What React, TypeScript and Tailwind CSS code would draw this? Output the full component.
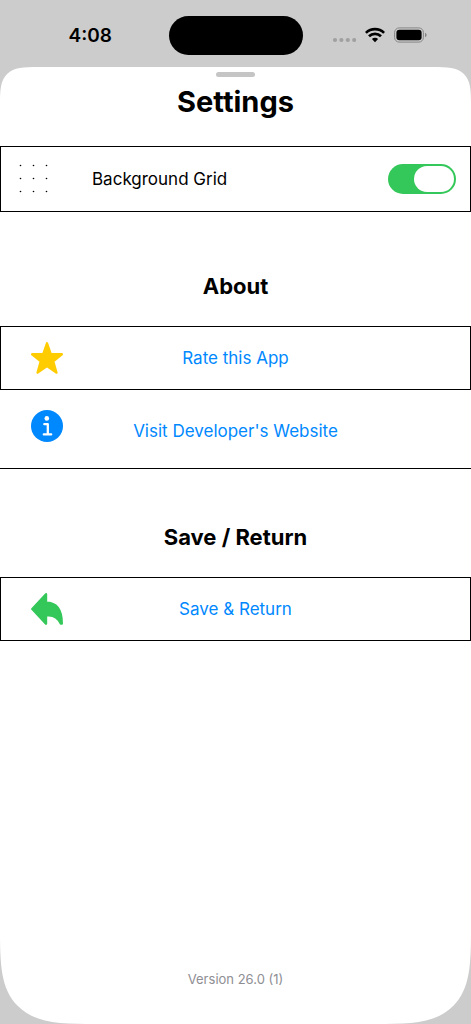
import { useState } from "react";
import type { FC, ReactNode } from "react";

const StatusBar: FC = () => (
  <header className="grid h-[67px] shrink-0 grid-cols-[1fr_134px_1fr] items-center">
    <time className="pt-1 pl-3 text-center text-[19px] leading-6 font-semibold">
      4:08
    </time>
    <div className="mt-[3px] h-[39px] rounded-full bg-black" />
    <div className="flex items-center justify-end gap-[9px] pt-[2px] pr-11">
      <svg width="24" height="16" viewBox="0 0 24 16" fill="#a0a0a0">
        <circle cx="3" cy="13" r="2.1" />
        <circle cx="9.4" cy="13" r="2.1" />
        <circle cx="15.8" cy="13" r="2.1" />
        <circle cx="22.2" cy="13" r="2.1" />
      </svg>
      <svg width="20" height="16" viewBox="0 0 20 16" fill="none" stroke="#000">
        <path d="M0.9 5.9a13 13 0 0 1 18.2 0" strokeWidth="2.7" />
        <path d="M4 9.3a8.6 8.6 0 0 1 12 0" strokeWidth="2.7" />
        <path
          d="M10 15.2 6.9 12.1a4.4 4.4 0 0 1 6.2 0z"
          fill="#000"
          stroke="none"
        />
      </svg>
      <svg width="33" height="16" viewBox="0 0 33 16">
        <rect
          x="0.6"
          y="0.9"
          width="28.8"
          height="14.2"
          rx="4.6"
          fill="none"
          stroke="#868686"
        />
        <rect x="2.4" y="2.7" width="25.2" height="10.6" rx="3" fill="#000" />
        <path d="M31 5.7c2.2 1 2.2 3.6 0 4.6z" fill="#868686" />
      </svg>
    </div>
  </header>
);

const GridIcon: FC = () => (
  <svg width="32" height="32" viewBox="0 0 32 32" fill="#000">
    {[3, 16, 29].map((y) =>
      [5, 18, 31].map((x) => (
        <circle key={`${x}-${y}`} cx={x - 0.5} cy={y - 0.5} r="0.8" />
      )),
    )}
  </svg>
);

const StarIcon: FC = () => (
  <svg
    width="32"
    height="32"
    viewBox="0 0 32 32"
    fill="#ffcc00"
    stroke="#ffcc00"
    strokeWidth="2.4"
    strokeLinejoin="round"
  >
    <path d="M16 1.3 19.8 12.3H30.8L22.2 19.2 25.4 30.6 16 24.1 6.6 30.6 9.8 19.2 1.2 12.3H12.2z" />
  </svg>
);

const InfoIcon: FC = () => (
  <svg width="32" height="32" viewBox="0 0 32 32">
    <circle cx="16" cy="16" r="16" fill="#0088ff" />
    <circle cx="15.8" cy="8.4" r="2.3" fill="#fff" />
    <path
      d="M13.3 14.2H16.8V24.4M12.8 24.4H20.2"
      fill="none"
      stroke="#fff"
      strokeWidth="2.3"
      strokeLinecap="round"
      strokeLinejoin="round"
    />
  </svg>
);

const ReturnIcon: FC = () => (
  <svg
    width="32"
    height="32"
    viewBox="0 0 32 32"
    fill="#34c759"
    stroke="#34c759"
    strokeWidth="2.4"
    strokeLinejoin="round"
  >
    <path d="M15 1.3 1.3 16 15 30.7V22.4C22 21.4 27 24.2 29.8 30.6H30.8C30.8 17 25.5 9.6 15 9.6z" />
  </svg>
);

const SectionTitle: FC<{ children: ReactNode }> = ({ children }) => (
  <h2 className="text-center text-[22px] leading-20 font-bold">{children}</h2>
);

const App: FC = () => {
  const [grid, setGrid] = useState(true);

  return (
    <div className="flex min-h-screen flex-col bg-[#cccccc] font-[Inter,sans-serif] text-black">
      <StatusBar />

      <main className="flex flex-1 flex-col rounded-t-[38px] rounded-b-[96px] bg-white [corner-shape:superellipse(1.75)]">
        <div className="mx-auto mt-[5px] h-[5px] w-[39px] rounded-full bg-[#c5c5c5]" />
        <h1 className="mt-[3px] text-center text-[29px] leading-11 font-bold">
          Settings
        </h1>

        <section className="mt-[22px] flex h-[66px] items-center border border-black pr-[14px] pl-[15px]">
          <GridIcon />
          <label htmlFor="grid" className="ml-11 flex-1 text-[17px] leading-6">
            Background Grid
          </label>
          <input
            id="grid"
            type="checkbox"
            role="switch"
            checked={grid}
            onChange={(e) => setGrid(e.target.checked)}
            className="flex h-[30px] w-[68px] appearance-none items-center rounded-full bg-[#d1d1d6] p-[2px] before:h-[26px] before:w-10 before:rounded-full before:bg-white checked:justify-end checked:bg-[#34c759]"
          />
        </section>

        <section className="mt-[34px]">
          <SectionTitle>About</SectionTitle>
          <button
            type="button"
            className="grid h-16 w-full grid-cols-[64px_1fr_64px] items-center border border-black px-[30px] text-[17px] leading-6 text-[#0088ff]"
          >
            <StarIcon />
            Rate this App
          </button>
          <a
            href="#website"
            className="grid h-[79px] grid-cols-[64px_1fr_64px] items-start border-b border-black px-[31px] pt-5 text-center text-[17px] leading-6 text-[#0088ff]"
          >
            <InfoIcon />
            <span className="pt-[9px]">Visit Developer's Website</span>
          </a>
        </section>

        <section className="mt-7">
          <SectionTitle>Save / Return</SectionTitle>
          <button
            type="button"
            className="grid h-16 w-full grid-cols-[64px_1fr_64px] items-center border border-black px-[30px] text-[17px] leading-6 text-[#0088ff]"
          >
            <ReturnIcon />
            Save &amp; Return
          </button>
        </section>

        <footer className="mt-auto pb-[35px] text-center text-[13px] leading-5 text-[#8e8e93]">
          Version 26.0 (1)
        </footer>
      </main>
    </div>
  );
};

export default App;
